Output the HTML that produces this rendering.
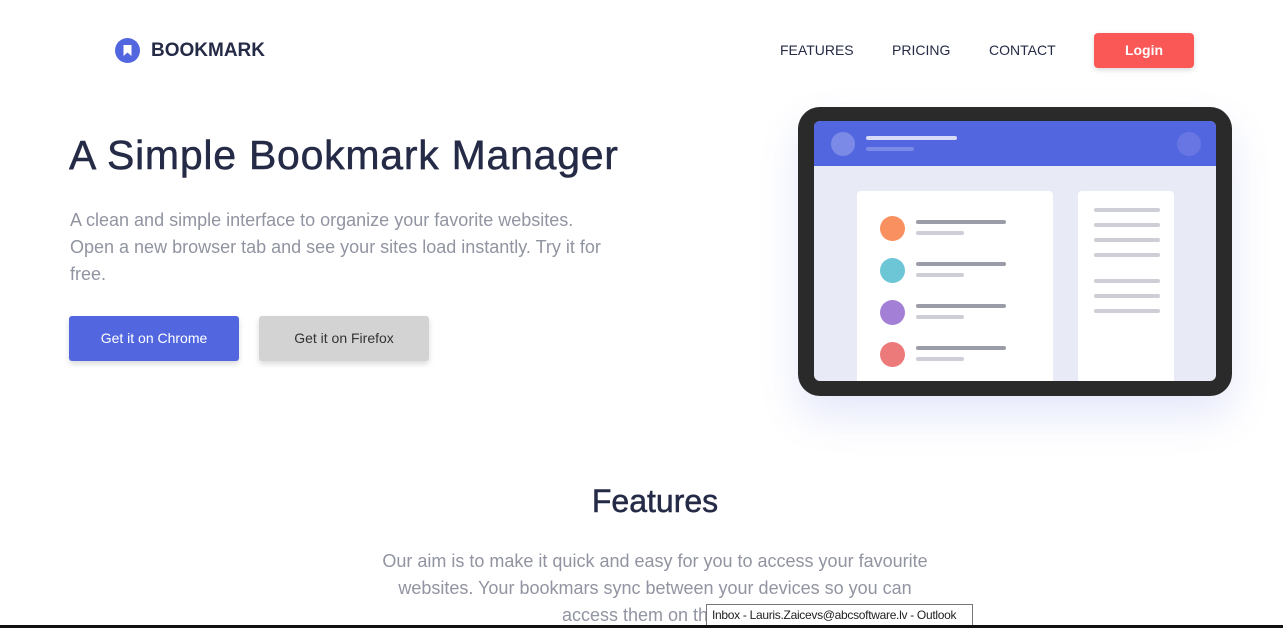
<!DOCTYPE html>
<html><head><meta charset="utf-8"><style>
*{margin:0;padding:0;box-sizing:border-box}
body{width:1283px;height:628px;overflow:hidden;background:#fff;font-family:"Liberation Sans",sans-serif;position:relative}
.a{position:absolute}
.nav{font-size:14px;color:#252b46;letter-spacing:0;top:42px}
.ln{position:absolute;height:4px;border-radius:2px}
</style></head><body>
<svg class="a" style="left:115px;top:38px" width="25" height="25" viewBox="0 0 25 25"><circle cx="12.5" cy="12.5" r="12.5" fill="#5267df"/><path d="M8.5 7h8v11l-4-3.5-4 3.5z" fill="#fff"/></svg>
<div class="a" style="left:151px;top:40px;font-size:19px;font-weight:bold;color:#252b46;letter-spacing:0">BOOKMARK</div>
<div class="a nav" style="left:780px">FEATURES</div>
<div class="a nav" style="left:892px">PRICING</div>
<div class="a nav" style="left:989px">CONTACT</div>
<div class="a" style="left:1094px;top:33px;width:100px;height:35px;background:#fa5757;border-radius:4px;color:#fff;font-size:14px;font-weight:bold;text-align:center;line-height:35px;box-shadow:0 2px 6px rgba(0,0,0,.15)">Login</div>
<div class="a" style="left:69px;top:132px;font-size:41px;color:#252b46;letter-spacing:0.75px;-webkit-text-stroke:0.5px #252b46">A Simple Bookmark Manager</div>
<div class="a" style="left:70px;top:207px;width:550px;font-size:18px;line-height:27px;color:#9194a1">A clean and simple interface to organize your favorite websites. Open a new browser tab and see your sites load instantly. Try it for free.</div>
<div class="a" style="left:69px;top:316px;width:170px;height:45px;background:#5267df;border-radius:3px;color:#fff;font-size:14px;text-align:center;line-height:45px;box-shadow:0 3px 6px rgba(0,0,0,.15)">Get it on Chrome</div>
<div class="a" style="left:259px;top:316px;width:170px;height:45px;background:#d3d3d3;border-radius:3px;color:#333;font-size:14px;text-align:center;line-height:45px;box-shadow:0 3px 6px rgba(0,0,0,.15)">Get it on Firefox</div>
<div class="a" style="left:798px;top:107px;width:434px;height:289px;background:#2a2a2a;border-radius:22px;box-shadow:0 20px 40px rgba(82,103,223,.15)"></div>
<div class="a" style="left:814px;top:121px;width:402px;height:260px;background:#e8eaf6;border-radius:6px;overflow:hidden">
 <div class="a" style="left:0;top:0;width:402px;height:45px;background:#5267df"></div>
 <div class="a" style="left:17px;top:11px;width:24px;height:24px;border-radius:50%;background:#7b8ae6"></div>
 <div class="a" style="left:363px;top:11px;width:24px;height:24px;border-radius:50%;background:#6776e2"></div>
 <div class="ln" style="left:52px;top:15px;width:91px;background:#d7dbf7"></div>
 <div class="ln" style="left:52px;top:26px;width:48px;background:#7b8ae6"></div>
 <div class="a" style="left:43px;top:70px;width:196px;height:195px;background:#fff;border-radius:4px"></div>
 <div class="a" style="left:264px;top:70px;width:96px;height:195px;background:#fff;border-radius:4px"></div>
</div>
<div class="a" style="left:880px;top:216px;width:25px;height:25px;border-radius:50%;background:#f8915f"></div>
<div class="a" style="left:880px;top:258px;width:25px;height:25px;border-radius:50%;background:#6cc6d6"></div>
<div class="a" style="left:880px;top:300px;width:25px;height:25px;border-radius:50%;background:#a37fd6"></div>
<div class="a" style="left:880px;top:342px;width:25px;height:25px;border-radius:50%;background:#ec7a7a"></div>
<div class="ln" style="left:916px;top:220px;width:90px;background:#9a9ca8"></div><div class="ln" style="left:916px;top:231px;width:48px;background:#cdced6"></div>
<div class="ln" style="left:916px;top:262px;width:90px;background:#9a9ca8"></div><div class="ln" style="left:916px;top:273px;width:48px;background:#cdced6"></div>
<div class="ln" style="left:916px;top:304px;width:90px;background:#9a9ca8"></div><div class="ln" style="left:916px;top:315px;width:48px;background:#cdced6"></div>
<div class="ln" style="left:916px;top:346px;width:90px;background:#9a9ca8"></div><div class="ln" style="left:916px;top:357px;width:48px;background:#cdced6"></div>
<div class="ln" style="left:1094px;top:208px;width:66px;background:#cdced6"></div>
<div class="ln" style="left:1094px;top:223px;width:66px;background:#cdced6"></div>
<div class="ln" style="left:1094px;top:238px;width:66px;background:#cdced6"></div>
<div class="ln" style="left:1094px;top:253px;width:66px;background:#cdced6"></div>
<div class="ln" style="left:1094px;top:279px;width:66px;background:#cdced6"></div>
<div class="ln" style="left:1094px;top:294px;width:66px;background:#cdced6"></div>
<div class="ln" style="left:1094px;top:309px;width:66px;background:#cdced6"></div>
<div class="a" style="left:0;top:483px;width:1310px;text-align:center;font-size:32px;color:#252b46;-webkit-text-stroke:0.5px #252b46">Features</div>
<div class="a" style="left:370px;top:548px;width:570px;text-align:center;font-size:18px;line-height:27px;color:#9194a1">Our aim is to make it quick and easy for you to access your favourite websites. Your bookmars sync between your devices so you can access them on the go.</div>
<div class="a" style="left:706px;top:604px;width:267px;height:22px;background:#fff;border:1px solid #777;font-size:12px;color:#222;line-height:20px;padding-left:5px;letter-spacing:-0.3px">Inbox - Lauris.Zaicevs@abcsoftware.lv - Outlook</div>
<div class="a" style="left:0;top:625px;width:1283px;height:3px;background:#111"></div>
</body></html>
